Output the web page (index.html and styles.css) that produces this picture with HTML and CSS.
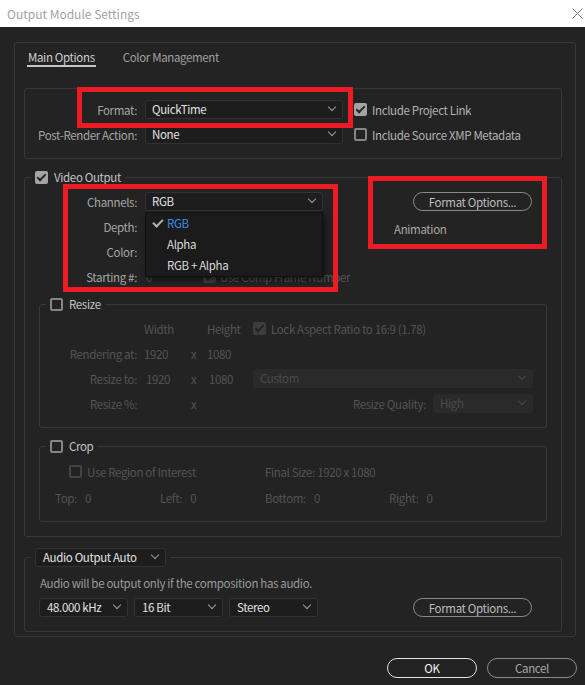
FILE: index.html
```html
<!DOCTYPE html>
<html lang="en">
<head>
    <meta charset="UTF-8">
    <meta name="viewport" content="width=device-width, initial-scale=1.0">
    <title>Output Module Settings</title>
    <link rel="stylesheet" href="styles.css">
</head>
<body>
    <div class="titlebar">
        <span class="title">Output Module Settings</span>
        <svg class="close" viewBox="0 0 11 11"><path d="M0.5 0.5L10.5 10.5M10.5 0.5L0.5 10.5"/></svg>
    </div>

    <div class="dialog">
        <div class="main-panel">
            <div class="tabs">
                <span class="tab active">Main Options</span>
                <span class="tab">Color Management</span>
            </div>

            <div class="box format-box">
                <div class="fields format-fields">
                    <span class="lbl">Format:</span>
                    <div class="select">QuickTime</div>
                    <span class="lbl">Post-Render Action:</span>
                    <div class="select">None</div>
                </div>
                <div class="checks">
                    <div class="check"><span class="cb on"></span>Include Project Link</div>
                    <div class="check"><span class="cb"></span>Include Source XMP Metadata</div>
                </div>
            </div>

            <fieldset class="group video">
                <legend><span class="cb on"></span>Video Output</legend>
                <div class="video-top">
                    <div class="fields video-fields">
                        <span class="lbl">Channels:</span>
                        <div class="select">RGB
                            <div class="menu">
                                <div class="menu-item sel">RGB</div>
                                <div class="menu-item">Alpha</div>
                                <div class="menu-item">RGB + Alpha</div>
                            </div>
                        </div>
                        <span class="lbl">Depth:</span>
                        <div class="select"></div>
                        <span class="lbl">Color:</span>
                        <div class="select"></div>
                        <span class="lbl">Starting #:</span>
                        <div class="start">
                            <span class="start-value">0</span>
                            <span class="cb on off"></span>
                            <span class="start-text">Use Comp Frame Number</span>
                        </div>
                    </div>
                    <div class="codec">
                        <button class="pill">Format Options...</button>
                        <div class="codec-name">Animation</div>
                    </div>
                </div>

                <fieldset class="group sub resize">
                    <legend><span class="cb"></span>Resize</legend>
                    <div class="grid-resize">
                        <span></span>
                        <span>Width</span>
                        <span></span>
                        <span>Height</span>
                        <div class="check"><span class="cb on off"></span>Lock Aspect Ratio to 16:9 (1.78)</div>

                        <span class="lbl">Rendering at:</span>
                        <span>1920</span>
                        <span>x</span>
                        <span>1080</span>
                        <span></span>

                        <span class="lbl">Resize to:</span>
                        <span class="num">1920</span>
                        <span>x</span>
                        <span class="num">1080</span>
                        <div class="select off">Custom</div>

                        <span class="lbl">Resize %:</span>
                        <span></span>
                        <span>x</span>
                        <span></span>
                        <div class="quality">
                            <span>Resize Quality:</span>
                            <div class="select off quality-select">High</div>
                        </div>
                    </div>
                </fieldset>

                <fieldset class="group sub crop">
                    <legend><span class="cb"></span>Crop</legend>
                    <div class="grid-crop">
                        <div class="roi"><span class="cb off"></span>Use Region of Interest</div>
                        <div class="final">Final Size: 1920 x 1080</div>
                        <div class="crop-field"><span>Top:</span><span>0</span></div>
                        <div class="crop-field"><span>Left:</span><span>0</span></div>
                        <div class="crop-field"><span>Bottom:</span><span>0</span></div>
                        <div class="crop-field"><span>Right:</span><span>0</span></div>
                    </div>
                </fieldset>
            </fieldset>

            <fieldset class="group audio">
                <legend><div class="select audio-mode">Audio Output Auto</div></legend>
                <p class="note">Audio will be output only if the composition has audio.</p>
                <div class="audio-row">
                    <div class="select audio-select">48.000 kHz</div>
                    <div class="select audio-select">16 Bit</div>
                    <div class="select audio-select">Stereo</div>
                    <button class="pill">Format Options...</button>
                </div>
            </fieldset>
        </div>

        <div class="actions">
            <button class="pill ok">OK</button>
            <button class="pill cancel">Cancel</button>
        </div>
    </div>

    <!-- red annotation frames drawn over the dialog -->
    <div class="mark mark-format"></div>
    <div class="mark mark-channels"></div>
    <div class="mark mark-codec"></div>
</body>
</html>
```

FILE: styles.css
```css
* {
    box-sizing: border-box;
}
body {
    margin: 0;
    background-color: #232323;
    color: #a6a6a6;
    font-family: "Noto Sans CJK KR", "Noto Sans", sans-serif;
    font-size: 11.5px;
    letter-spacing: -0.35px;
    line-height: 16px;
}

/* window title */
.titlebar {
    height: 27px;
    background-color: #fff;
    display: flex;
    align-items: center;
    justify-content: space-between;
    padding: 0 2px 0 7px;
}
.title {
    color: #a2a2a2;
    font-size: 12px;
    letter-spacing: 0;
}
.close {
    width: 11px;
    height: 11px;
    stroke: #7a7a7a;
    stroke-width: 1;
    fill: none;
}

.dialog {
    padding: 15px 9px 0 14px;
}
.main-panel {
    border: 1px solid #383838;
    border-radius: 3px;
    padding: 0 13px 4px 9px;
}

/* tabs */
.tabs {
    display: flex;
    gap: 26px;
    padding: 6px 0 0 3px;
}
.tab {
    padding: 0 1px;
    border-bottom: 2px solid transparent;
    color: #a0a0a0;
}
.tab.active {
    color: #cfcfcf;
    border-bottom-color: #c6c6c6;
}

/* shared controls */
.box {
    border: 1px solid #383838;
    border-radius: 3px;
}
.fields {
    display: grid;
    column-gap: 8px;
    row-gap: 6px;
    grid-auto-rows: 19px;
    align-items: center;
}
.lbl {
    text-align: right;
    white-space: nowrap;
}
.select {
    position: relative;
    height: 19px;
    padding: 0 20px 0 6px;
    background-color: #1d1d1d;
    border: 1px solid #323232;
    border-radius: 3px;
    color: #e2e2e2;
    line-height: 17px;
    white-space: nowrap;
}
.select::after {
    content: "";
    position: absolute;
    right: 7px;
    top: 3px;
    width: 5px;
    height: 5px;
    border-right: 1px solid #9c9c9c;
    border-bottom: 1px solid #9c9c9c;
    transform: rotate(45deg);
}
.select.off {
    background-color: #2a2a2a;
    border-color: #2a2a2a;
    color: #4a4a4a;
}
.select.off::after {
    border-color: #4a4a4a;
}
.checks {
    margin-left: 11px;
    display: flex;
    flex-direction: column;
    gap: 6px;
}
.check {
    display: flex;
    align-items: center;
    gap: 5px;
    height: 19px;
    white-space: nowrap;
    color: #b2b2b2;
}
.cb {
    position: relative;
    flex: none;
    width: 13px;
    height: 13px;
    border: 2px solid #868686;
    border-radius: 2px;
}
.cb.on {
    background-color: #a4a4a4;
    border-color: #a4a4a4;
}
.cb.on::after {
    content: "";
    position: absolute;
    left: 2px;
    top: -1px;
    width: 3px;
    height: 7px;
    border-right: 2px solid #262626;
    border-bottom: 2px solid #262626;
    transform: rotate(45deg);
}
.cb.off {
    border-color: #444;
}
.cb.on.off {
    background-color: #3d3d3d;
    border-color: #3d3d3d;
}
.cb.on.off::after {
    border-color: #222;
}
.pill {
    width: 119px;
    height: 19px;
    padding: 0;
    background: transparent;
    border: 1px solid #8a8a8a;
    border-radius: 10px;
    color: #bdbdbd;
    font: inherit;
    letter-spacing: inherit;
}

/* format block */
.format-box {
    margin-top: 21px;
    padding: 11px 0 14px 0;
    display: flex;
}
.format-fields {
    grid-template-columns: 112px 198px;
}

/* fieldsets */
.group {
    margin: 0;
    border: 1px solid #383838;
    border-radius: 3px;
    min-width: 0;
}
.group > legend {
    display: flex;
    align-items: center;
    gap: 6px;
    padding: 0 4px;
    color: #c4c4c4;
}
.video {
    margin-top: 10px;
    padding: 7px 14px 14px 14px;
}
.video > legend {
    margin-left: -8px;
}
.video-top {
    display: flex;
    align-items: flex-start;
}
.video-fields {
    grid-template-columns: 98px 178px;
}
.start {
    display: flex;
    align-items: center;
    gap: 4px;
    white-space: nowrap;
    color: #545454;
}
.start-value {
    flex: none;
    width: 54px;
    padding-left: 1px;
}
.start-text {
    flex: none;
    padding-top: 1px;
}
.codec {
    margin: 0 15px 0 auto;
    width: 138px;
    display: flex;
    flex-direction: column;
    align-items: flex-end;
}
.codec-name {
    align-self: flex-start;
    margin-top: 10px;
    color: #a9a9a9;
}

/* channels dropdown list */
.menu {
    position: absolute;
    top: 19px;
    left: -1px;
    right: -1px;
    z-index: 2;
    background-color: #1b1b1b;
    border: 1px solid #101010;
    box-shadow: 2px 3px 5px rgba(0, 0, 0, 0.5);
}
.menu-item {
    position: relative;
    height: 21px;
    line-height: 21px;
    padding-left: 21px;
    color: #dadada;
}
.menu-item.sel {
    color: #3a8de6;
}
.menu-item.sel::before {
    content: "";
    position: absolute;
    left: 9px;
    top: 4px;
    width: 4px;
    height: 8px;
    border-right: 2px solid #b4b4b4;
    border-bottom: 2px solid #b4b4b4;
    transform: rotate(45deg);
}

/* resize */
.sub {
    margin-top: 10px;
}
.resize {
    padding: 7px 13px 14px 0;
}
.resize > legend {
    margin-left: 6px;
}
.grid-resize {
    display: grid;
    grid-template-columns: 104px 47px 16px 46px 1fr;
    grid-auto-rows: 19px;
    row-gap: 6px;
    align-items: center;
    color: #545454;
}
.grid-resize .lbl {
    padding-right: 7px;
}
.grid-resize .check {
    color: #545454;
}
.num {
    padding-left: 2px;
}
.quality {
    display: flex;
    align-items: center;
    justify-content: flex-end;
    gap: 7px;
}
.quality-select {
    width: 100px;
}

/* crop */
.crop {
    padding: 8px 0 14px 15px;
}
.crop > legend {
    margin-left: -9px;
}
.grid-crop {
    display: grid;
    grid-template-columns: 105px 105px 124px 1fr;
    grid-auto-rows: 19px;
    row-gap: 7px;
    align-items: center;
    color: #545454;
}
.roi {
    grid-column: span 2;
    padding-left: 14px;
    display: flex;
    align-items: center;
    gap: 5px;
}
.final {
    grid-column: span 2;
}
.crop-field {
    display: flex;
    gap: 8px;
}

/* audio */
.audio {
    margin-top: 11px;
    padding: 7px 14px 14px 14px;
}
.audio > legend {
    margin-left: -8px;
}
.audio-mode {
    width: 131px;
    padding-left: 7px;
}
.note {
    margin: 0 0 0 1px;
    line-height: 18px;
    color: #9b9b9b;
}
.audio-row {
    display: flex;
    gap: 6px;
    margin-top: 6px;
}
.audio-select {
    width: 89px;
    padding-left: 7px;
}
.audio-row .pill {
    margin: 0 15px 0 auto;
}

/* bottom buttons */
.actions {
    display: flex;
    justify-content: flex-end;
    gap: 10px;
    margin: 21px -1px 0 0;
}
.actions .pill {
    width: 90px;
    height: 20px;
}
.pill.ok {
    border-color: #e2e2e2;
    color: #f2f2f2;
}
.pill.cancel {
    color: #a6a6a6;
}

/* annotation frames */
.mark {
    position: absolute;
    border: 5px solid #ed1c24;
    z-index: 5;
}
.mark-format {
    left: 77px;
    top: 87px;
    width: 276px;
    height: 41px;
}
.mark-channels {
    left: 63px;
    top: 184px;
    width: 275px;
    height: 108px;
}
.mark-codec {
    left: 368px;
    top: 176px;
    width: 179px;
    height: 73px;
}
```
